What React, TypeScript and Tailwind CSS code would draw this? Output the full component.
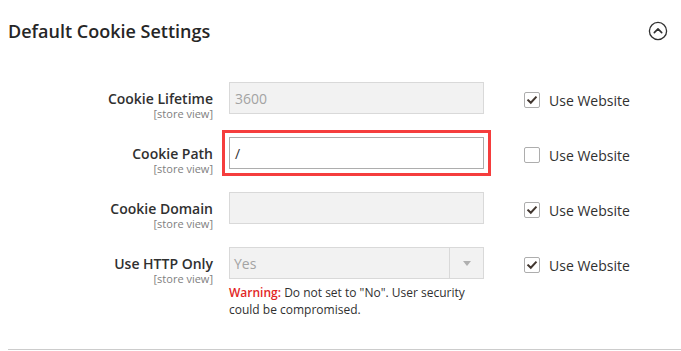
const font = {fontFamily: '"Open Sans", "Liberation Sans", sans-serif'};

type Field = {
    label: string;
    kind: 'text' | 'select';
    value: string;
    disabled: boolean;
    inherit: boolean;
    highlight?: boolean;
    warning?: boolean;
};

const fields: Field[] = [
    {label: 'Cookie Lifetime', kind: 'text', value: '3600', disabled: true, inherit: true},
    {label: 'Cookie Path', kind: 'text', value: '/', disabled: false, inherit: false, highlight: true},
    {label: 'Cookie Domain', kind: 'text', value: '', disabled: true, inherit: true},
    {label: 'Use HTTP Only', kind: 'select', value: 'Yes', disabled: true, inherit: true, warning: true},
];

function CollapseIcon() {
    return (
        <svg width="20" height="20" viewBox="0 0 20 20" fill="none" stroke="#303030" strokeWidth="1.3">
            <circle cx="10" cy="10" r="8.6"/>
            <polyline points="6.3,11.6 10,7.9 13.7,11.6" strokeWidth="1.6" strokeLinecap="round" strokeLinejoin="round"/>
        </svg>
    );
}

function Checkbox({checked}: { checked: boolean }) {
    return (
        <span className="flex h-[16px] w-[16px] items-center justify-center rounded-[2px] border border-[#adadad] bg-white">
            {checked && (
                <svg width="12" height="12" viewBox="0 0 12 12" fill="none">
                    <polyline points="2.2,6.3 4.8,8.8 9.8,3.4" stroke="#41362f" strokeWidth="2" strokeLinecap="square"/>
                </svg>
            )}
        </span>
    );
}

function Control({field}: { field: Field }) {
    const base = field.disabled
        ? 'bg-[#f2f2f2] border-[#d9d9d9] text-[#a3a3a3]'
        : 'bg-white border-[#adadad] text-[#303030]';
    if (field.kind === 'select') {
        return (
            <div className={`flex h-[32px] w-[255px] border ${base}`}>
                <span className="flex flex-1 items-center pl-[4px] text-[14px]">{field.value}</span>
                <span className="flex w-[34px] items-center justify-center border-l border-[#d9d9d9]">
                    <span className="h-0 w-0 border-x-[4px] border-t-[5px] border-x-transparent border-t-[#b0b0b0]"/>
                </span>
            </div>
        );
    }
    return (
        <div
            className={`flex h-[32px] w-[255px] items-center border pl-[5px] text-[14px] ${base} ${
                field.highlight ? 'outline-[3px] outline-offset-[4px] outline-[#f53d3d] outline-solid' : ''
            }`}
        >
            {field.value}
        </div>
    );
}

export default function App() {
    return (
        <div className="h-[351px] w-[681px] overflow-hidden bg-white text-[#303030]" style={font}>
            <div className="flex items-center justify-between pl-[8px] pr-[13px] pt-[19px]">
                <h2 className="text-[18px] font-semibold leading-[24px] text-[#262626]">Default Cookie Settings</h2>
                <CollapseIcon/>
            </div>

            <div className="mt-[39px]">
                {fields.map(field => (
                    <div key={field.label} className={`flex items-start ${field.warning ? '' : 'h-[55px]'}`}>
                        <div className="w-[213px] pt-[9px] text-right">
                            <div className="text-[14px] font-semibold leading-[16px]">{field.label}</div>
                            <div className="text-[11px] leading-[13px] text-[#808080]">[store view]</div>
                        </div>
                        <div className="ml-[16px] w-[255px]">
                            <Control field={field}/>
                            {field.warning && (
                                <p className="mt-[5px] text-[12px] leading-[17px]">
                                    <span className="font-semibold text-[#e22626]">Warning:</span> Do not set to "No". User
                                    security could be compromised.
                                </p>
                            )}
                        </div>
                        <label className="ml-[40px] mt-[10px] flex h-[16px] items-center gap-[9px] text-[14px]">
                            <Checkbox checked={field.inherit}/>
                            Use Website
                        </label>
                    </div>
                ))}
            </div>

            <div className="ml-[8px] mt-[31px] border-t border-[#cccccc]"/>
        </div>
    );
}
